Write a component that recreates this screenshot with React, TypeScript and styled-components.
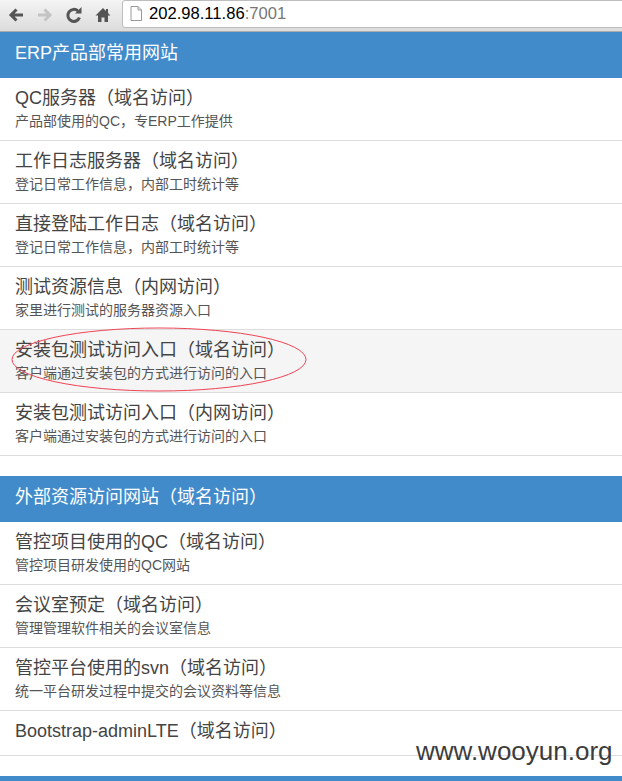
import React from "react";
import styled, { createGlobalStyle } from "styled-components";

const Global = createGlobalStyle`
  html, body { margin: 0; padding: 0; background: #fff; overflow: hidden; height: 781px; }
  * { box-sizing: border-box; }
`;
const Page = styled.div`
  position: relative; width: 622px; height: 781px; overflow: hidden;
  font-family: "Liberation Sans", "Noto Sans CJK SC", sans-serif;
`;
const Toolbar = styled.div`
  height: 32px; display: flex; align-items: center; padding: 0 0 0 7px;
  background: linear-gradient(#f4f4f4, #dcdcdc);
  border-bottom: 1px solid #a9a9a9;
`;
const NavIcon = styled.svg`
  width: 18px; height: 18px; flex: none; margin-right: 11px; margin-top: -2px;
`;
const Omnibox = styled.div`
  flex: 1; height: 28px; margin: 0 -4px 4px 10px; display: flex; align-items: center; gap: 7px;
  padding-left: 7px; background: #fff; border: 1px solid #bdbdbd; border-radius: 3px;
  font-size: 16.6px; color: #000;
`;
const Port = styled.span` color: #777; `;
const Content = styled.div`
  display: flex; flex-direction: column; gap: 20px;
`;
const Panel = styled.section`
  border-radius: 0 0 4px 4px;
`;
const PanelHead = styled.h3`
  margin: 0; height: 46px; padding: 0 15px 9px; display: flex; align-items: center;
  background: #428bca; color: #fff; font-size: 18px; font-weight: 400;
`;
const Row = styled.div<{ $active?: boolean; $short?: boolean }>`
  height: ${p => (p.$short ? 45 : 63)}px; padding: 10px 15px 0;
  background: ${p => (p.$active ? "#f5f5f5" : "#fff")};
  border-bottom: 1px solid #ddd;
`;
const Title = styled.div`
  font-size: 18px; line-height: 21px; color: #444;
`;
const Sub = styled.div`
  font-size: 14px; line-height: 20px; margin-top: 2px; color: #555;
`;
const Ring = styled.svg`
  position: absolute; left: 10px; top: 326px; width: 298px; height: 68px; pointer-events: none;
`;
const Watermark = styled.div`
  position: absolute; left: 416px; top: 737px; font-size: 26px; line-height: 28px; color: #3c3c3c;
`;

const top = [
  ["QC服务器（域名访问）", "产品部使用的QC，专ERP工作提供"],
  ["工作日志服务器（域名访问）", "登记日常工作信息，内部工时统计等"],
  ["直接登陆工作日志（域名访问）", "登记日常工作信息，内部工时统计等"],
  ["测试资源信息（内网访问）", "家里进行测试的服务器资源入口"],
  ["安装包测试访问入口（域名访问）", "客户端通过安装包的方式进行访问的入口"],
  ["安装包测试访问入口（内网访问）", "客户端通过安装包的方式进行访问的入口"],
];
const bottom = [
  ["管控项目使用的QC（域名访问）", "管控项目研发使用的QC网站"],
  ["会议室预定（域名访问）", "管理管理软件相关的会议室信息"],
  ["管控平台使用的svn（域名访问）", "统一平台研发过程中提交的会议资料等信息"],
  ["Bootstrap-adminLTE（域名访问）", ""],
];

export default function App() {
  return (
    <Page>
      <Global />
      <Toolbar>
        <NavIcon viewBox="0 0 18 18"><path d="M16 9H5M9.500 3.500 4 9l5.500 5.500" fill="none" stroke="#555" strokeWidth="3" /></NavIcon>
        <NavIcon viewBox="0 0 18 18"><path d="M2 9h11M8.500 3.500 14 9l-5.500 5.500" fill="none" stroke="#c4c4c4" strokeWidth="3" /></NavIcon>
        <NavIcon viewBox="0 0 18 18"><path d="M14.500 11.500A6 6 0 1 1 13 5" fill="none" stroke="#555" strokeWidth="3" /><path d="M10 7.500h6.500V1z" fill="#555" /></NavIcon>
        <NavIcon viewBox="0 0 18 18" style={{ marginRight: 0 }}><path d="M9 2 1.500 9.500H4V16h3.500v-4.500h3V16H14V9.500h2.500L14 7V3h-2v2z" fill="#555" /></NavIcon>
        <Omnibox>
          <svg width="12" height="15" viewBox="0 0 12 15"><path d="M1 .5h7l3.500 3.500v10.500H1zM8 .5V4h3.500" fill="#fff" stroke="#999" /></svg>
          <span>202.98.11.86<Port>:7001</Port></span>
        </Omnibox>
      </Toolbar>
      <Content>
        <Panel>
          <PanelHead>ERP产品部常用网站</PanelHead>
          {top.map(([t, s], i) => (
            <Row key={t + i} $active={i === 4}><Title>{t}</Title><Sub>{s}</Sub></Row>
          ))}
        </Panel>
        <Panel>
          <PanelHead>外部资源访问网站（域名访问）</PanelHead>
          {bottom.map(([t, s]) => (
            <Row key={t} $short={!s}><Title>{t}</Title>{s && <Sub>{s}</Sub>}</Row>
          ))}
        </Panel>
        <PanelHead />
      </Content>
      <Ring viewBox="0 0 298 68"><ellipse cx="149" cy="33.500" rx="147" ry="31.500" fill="none" stroke="#ee4455" strokeWidth="1" /></Ring>
      <Watermark>www.wooyun.org</Watermark>
    </Page>
  );
}
